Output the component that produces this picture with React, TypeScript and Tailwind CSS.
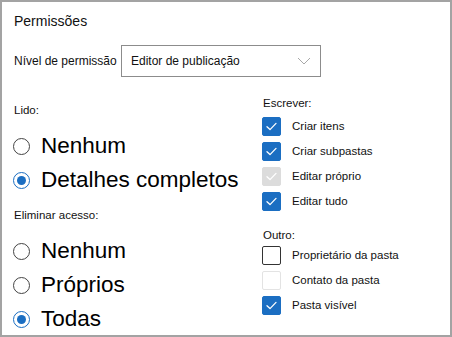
import React from "react";

const font = { fontFamily: '"Liberation Sans", Arial, sans-serif' };

function Radio({ label, checked }: { label: string; checked?: boolean }) {
  return (
    <div className="flex h-[34px] items-center">
      <span
        className={
          "flex h-[17px] w-[17px] shrink-0 items-center justify-center rounded-full border bg-white " +
          (checked ? "border-[#1b6ec2]" : "border-[#444]")
        }
      >
        {checked && <span className="h-[9px] w-[9px] rounded-full bg-[#1b6ec2]" />}
      </span>
      <span className="ml-[11px] text-[22.5px] leading-none text-black">{label}</span>
    </div>
  );
}

type BoxState = "on" | "off" | "on-disabled" | "off-disabled";

function Check() {
  return (
    <svg width="13" height="13" viewBox="0 0 13 13" fill="none">
      <path d="M2 6.8 L5 9.6 L11 3.4" stroke="white" strokeWidth="1.3" strokeLinecap="round" strokeLinejoin="round" />
    </svg>
  );
}

function Box({ label, state }: { label: string; state: BoxState }) {
  let cls = "";
  if (state === "on") cls = "border bg-[#1b6ec2] border-[#1b6ec2]";
  if (state === "on-disabled") cls = "border bg-[#dcdcdc] border-[#dcdcdc]";
  if (state === "off") cls = "border-[1.5px] bg-white border-[#333]";
  if (state === "off-disabled") cls = "border bg-white border-[#e3e3e3]";
  return (
    <div className="flex h-[25px] items-center">
      <span className={"flex h-[19px] w-[19px] shrink-0 items-center justify-center rounded-[2px] " + cls}>
        {(state === "on" || state === "on-disabled") && <Check />}
      </span>
      <span className="ml-[11px] text-[11.5px] leading-none text-[#111]">{label}</span>
    </div>
  );
}

export default function App() {
  return (
    <div
      style={font}
      className="box-border h-[337px] w-[452px] overflow-hidden border-2 border-[#a3a3a3] bg-white pl-[12px] pt-[9px] text-[#111]"
    >
      <div className="h-[20px] text-[14px] leading-[20px]">Permissões</div>

      <div className="mt-[14px] flex items-center">
        <span className="w-[107px] text-[12px]">Nível de permissão</span>
        <div className="flex h-[32px] w-[200px] items-center justify-between border border-[#8c8c8c] pl-[9px] pr-[9px]">
          <span className="text-[12px]">Editor de publicação</span>
          <svg width="14" height="8" viewBox="0 0 14 8" fill="none">
            <path d="M1 1 L7 7 L13 1" stroke="#a8a8a8" strokeWidth="1" />
          </svg>
        </div>
      </div>

      <div className="mt-[18px] flex">
        <div className="w-[249px] pt-[7px]">
          <div className="h-[16px] text-[11.5px] leading-[16px]">Lido:</div>
          <div className="mt-[11px] -ml-[1px]">
            <Radio label="Nenhum" />
            <Radio label="Detalhes completos" checked />
          </div>
          <div className="mt-[10px] h-[16px] text-[11.5px] leading-[16px]">Eliminar acesso:</div>
          <div className="mt-[11px] -ml-[1px]">
            <Radio label="Nenhum" />
            <Radio label="Próprios" />
            <Radio label="Todas" checked />
          </div>
        </div>

        <div className="flex-1">
          <div className="h-[16px] text-[11.5px] leading-[16px]">Escrever:</div>
          <div className="mt-[3px] -ml-[1px]">
            <Box label="Criar itens" state="on" />
            <Box label="Criar subpastas" state="on" />
            <Box label="Editar próprio" state="on-disabled" />
            <Box label="Editar tudo" state="on" />
          </div>
          <div className="mt-[13px] h-[16px] text-[11.5px] leading-[16px]">Outro:</div>
          <div className="-ml-[1px]">
            <Box label="Proprietário da pasta" state="off" />
            <Box label="Contato da pasta" state="off-disabled" />
            <Box label="Pasta visível" state="on" />
          </div>
        </div>
      </div>
    </div>
  );
}
